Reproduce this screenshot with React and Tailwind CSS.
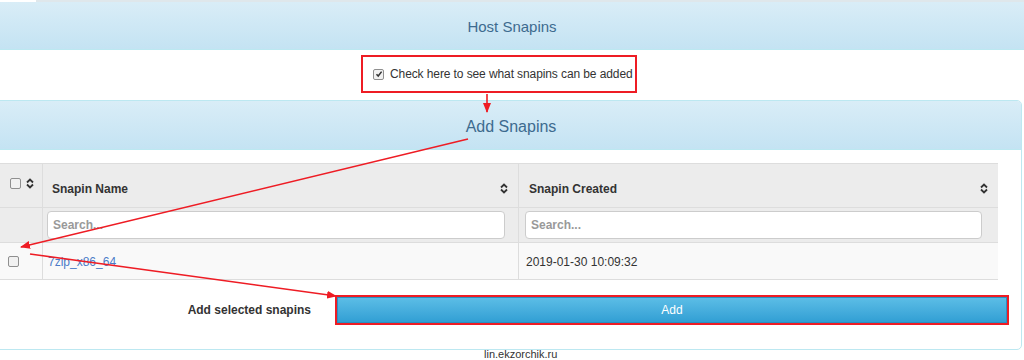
import React from 'react'

function SortIcon() {
  return (
    <svg width="8" height="11" viewBox="0 0 8 11" className="shrink-0">
      <path d="M1 4.5 L4 1.5 L7 4.5" fill="none" stroke="#333" strokeWidth="1.8" />
      <path d="M1 6.5 L4 9.5 L7 6.5" fill="none" stroke="#333" strokeWidth="1.8" />
    </svg>
  )
}

function Box({ checked }) {
  return (
    <span className="inline-flex items-center justify-center w-[11px] h-[11px] rounded-[2px] border border-[#8f8f8f] bg-[#f1f1f1] shrink-0">
      {checked && (
        <svg width="8" height="8" viewBox="0 0 8 8">
          <path d="M1.5 4.2 L3.2 6 L6.6 1.6" fill="none" stroke="#333" strokeWidth="1.5" />
        </svg>
      )}
    </span>
  )
}

export default function App() {
  return (
    <div className="relative w-[1024px] h-[360px] overflow-hidden bg-white text-[#333]" style={{ fontFamily: '"Liberation Sans", Arial, sans-serif' }}>
      <div className="flex h-[2px]">
        <div className="w-[36px] bg-white" />
        <div className="flex-1 bg-[#dfe7eb]" />
      </div>

      <div className="h-[48px] flex items-center justify-center pt-[3px] bg-gradient-to-b from-[#d9edf7] to-[#c4e3f3] border-b border-[#bce8f1] text-[#3d6b8f] text-[15px]">
        Host Snapins
      </div>

      <div className="pt-[5px] pl-[361px]">
        <div className="w-[276px] h-[38px] border-2 border-[#ee1c24] flex items-center gap-[6px] pl-[10px] text-[12px] text-[#333] whitespace-nowrap">
          <Box checked />
          <span className="tracking-[-0.1px]">Check here to see what snapins can be added</span>
        </div>
      </div>

      <div className="mt-[7px] -ml-[5px] w-[1027px] h-[250px] border border-[#bce8f1] rounded-tr-[5px] rounded-br-[5px]">
        <div className="h-[49px] flex items-center justify-center pl-[5px] pt-[3px] bg-gradient-to-b from-[#d9edf7] to-[#c4e3f3] border-b border-[#bce8f1] text-[#3d6b8f] text-[16px] rounded-tr-[4px]">
          Add Snapins
        </div>

        <div className="pt-[13px]">
          <div className="w-[1002px] border-b border-[#ddd] text-[12px]">
            <div className="flex h-[44px] bg-[#ececec] border-t border-[#ddd] font-bold">
              <div className="w-[47px] border-r border-[#ddd] flex items-start gap-[5px] pl-[14px] pt-[14px]">
                <Box />
                <SortIcon />
              </div>
              <div className="w-[476px] border-r border-[#ddd] flex items-center justify-between pl-[9px] pr-[10px] pt-[6px]">
                <span>Snapin Name</span>
                <SortIcon />
              </div>
              <div className="flex-1 flex items-center justify-between pl-[10px] pr-[10px] pt-[6px]">
                <span>Snapin Created</span>
                <SortIcon />
              </div>
            </div>

            <div className="flex h-[35px] bg-[#ececec] border-t border-[#ddd] font-bold">
              <div className="w-[47px] border-r border-[#ddd]" />
              <div className="w-[476px] border-r border-[#ddd] flex items-center pl-[4px] pr-[13px]">
                <input className="w-full h-[28px] rounded-[4px] border border-[#ccc] bg-white px-[5px] text-[12px] font-bold outline-none placeholder:text-[#999]" placeholder="Search..." />
              </div>
              <div className="flex-1 flex items-center pl-[6px] pr-[16px]">
                <input className="w-full h-[28px] rounded-[4px] border border-[#ccc] bg-white px-[5px] text-[12px] font-bold outline-none placeholder:text-[#999]" placeholder="Search..." />
              </div>
            </div>

            <div className="flex h-[37px] bg-[#f9f9f9] border-t border-[#ddd]">
              <div className="w-[47px] border-r border-[#ddd] flex items-center pl-[12px]">
                <Box />
              </div>
              <div className="w-[476px] border-r border-[#ddd] flex items-center pl-[5px] pt-[2px]">
                <a className="text-[#4a7bc8]">7zip_x86_64</a>
              </div>
              <div className="flex-1 flex items-center pl-[7px] pt-[2px]">2019-01-30 10:09:32</div>
            </div>
          </div>

          <div className="flex items-center mt-[15px] h-[30px]">
            <div className="w-[339px] text-right pr-[24px] text-[12px] font-bold">Add selected snapins</div>
            <div className="w-[674px] h-[30px] border-2 border-[#ee1c24]">
              <div className="h-full flex items-center justify-center bg-gradient-to-b from-[#5bbde6] to-[#319fd4] border border-[#2a8fc0] text-white text-[12px]">
                Add
              </div>
            </div>
          </div>
        </div>
      </div>

      <div className="absolute left-[484px] top-[346px] text-[11px] text-[#333]">lin.ekzorchik.ru</div>

      <svg className="absolute inset-0 pointer-events-none" width="1024" height="360">
        <defs>
          <marker id="ah" markerWidth="10" markerHeight="8" refX="9" refY="4" orient="auto" markerUnits="userSpaceOnUse">
            <path d="M0 0 L10 4 L0 8 Z" fill="#ee1c24" />
          </marker>
        </defs>
        <line x1="487" y1="94" x2="487" y2="112" stroke="#ee1c24" strokeWidth="1.6" markerEnd="url(#ah)" />
        <line x1="468" y1="139" x2="21" y2="247" stroke="#ee1c24" strokeWidth="1.6" markerEnd="url(#ah)" />
        <line x1="30" y1="254" x2="336" y2="296" stroke="#ee1c24" strokeWidth="1.6" markerEnd="url(#ah)" />
      </svg>
    </div>
  )
}
